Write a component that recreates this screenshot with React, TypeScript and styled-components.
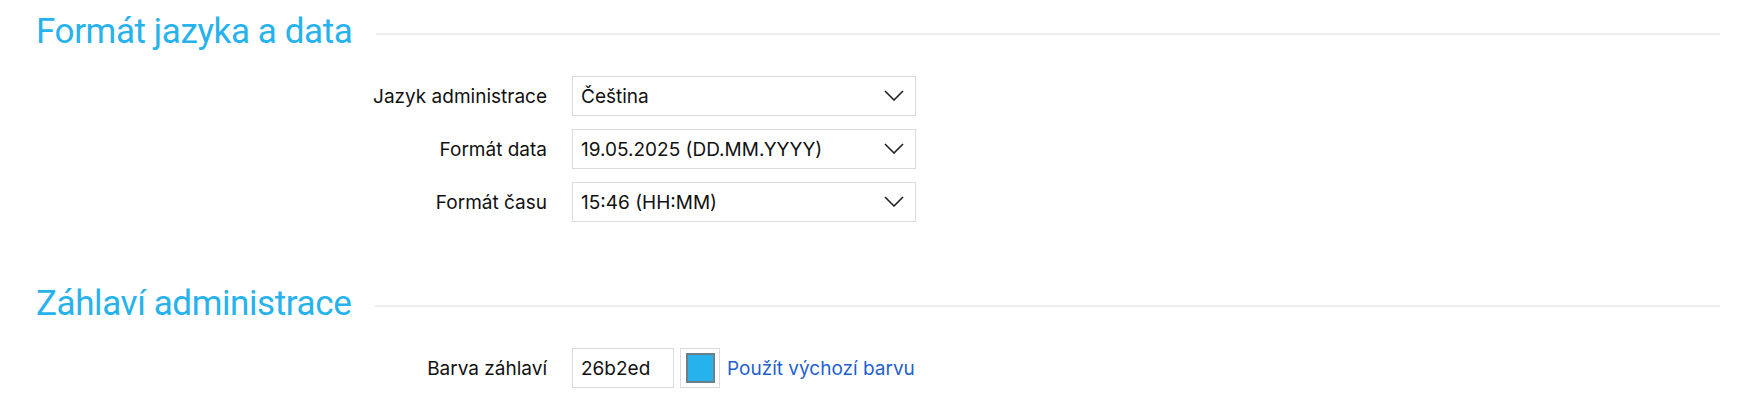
import styled, { createGlobalStyle } from "styled-components";

const GlobalStyle = createGlobalStyle`
  html, body {
    margin: 0;
    padding: 0;
    background: #fff;
  }
  body {
    font-family: Inter, "Noto Sans", sans-serif;
    color: #111;
  }
`;

const Page = styled.div`
  padding: 9px 35px 0 36px;
`;

const SectionHead = styled.div`
  display: flex;
  align-items: center;
  height: 44px;
  margin-top: ${(props: { $gap?: number }) => props.$gap ?? 0}px;
`;

const SectionTitle = styled.h2`
  margin: 0;
  font-family: Roboto, "Liberation Sans", sans-serif;
  font-weight: 400;
  font-size: 35px;
  letter-spacing: -0.4px;
  color: #26b2ed;
  white-space: nowrap;
`;

const Rule = styled.div`
  flex: 1;
  height: 2px;
  margin-left: 24px;
  margin-top: 5px;
  background: #eeeeee;
`;

const Form = styled.div`
  display: flex;
  flex-direction: column;
  gap: 13px;
  margin-top: 23px;
`;

const Row = styled.div`
  display: grid;
  grid-template-columns: 511px 1fr;
  column-gap: 25px;
  align-items: center;
`;

const Label = styled.label`
  text-align: right;
  font-size: 19px;
  color: #111;
`;

const SelectWrap = styled.div`
  position: relative;
  width: 344px;
  height: 40px;
`;

const Select = styled.select`
  appearance: none;
  width: 100%;
  height: 100%;
  box-sizing: border-box;
  border: 1px solid #dcdcdc;
  border-radius: 0;
  background: #fff;
  padding: 0 40px 0 8px;
  font-family: Inter, "Noto Sans", sans-serif;
  font-size: 19px;
  color: #111;
  outline: none;
`;

const Chevron = styled.svg`
  position: absolute;
  right: 12px;
  top: 14px;
  width: 20px;
  height: 11px;
  pointer-events: none;
`;

const Controls = styled.div`
  display: flex;
  align-items: center;
`;

const ColorInput = styled.input`
  width: 102px;
  height: 40px;
  box-sizing: border-box;
  border: 1px solid #dcdcdc;
  padding: 0 8px;
  font-family: Inter, "Noto Sans", sans-serif;
  font-size: 19px;
  color: #111;
  outline: none;
`;

const Swatch = styled.div`
  width: 40px;
  height: 40px;
  box-sizing: border-box;
  margin-left: 6px;
  border: 1px solid #dcdcdc;
  display: flex;
  align-items: center;
  justify-content: center;
`;

const SwatchFill = styled.div<{ $color: string }>`
  width: 29px;
  height: 30px;
  box-sizing: border-box;
  border: 2px solid #6f7f88;
  background: ${(props) => props.$color};
`;

const ResetLink = styled.a`
  margin-left: 7px;
  font-size: 19px;
  color: #1f5fcf;
  text-decoration: none;
  cursor: pointer;
`;

interface ISelectField {
  label: string;
  value: string;
}

function SelectField({ label, value }: ISelectField) {
  return (
    <Row>
      <Label>{label}</Label>
      <SelectWrap>
        <Select defaultValue={value}>
          <option value={value}>{value}</option>
        </Select>
        <Chevron viewBox="0 0 20 11" fill="none">
          <polyline
            points="1,1 10,10 19,1"
            stroke="#222"
            strokeWidth="1.6"
            strokeLinejoin="miter"
          />
        </Chevron>
      </SelectWrap>
    </Row>
  );
}

const fields: ISelectField[] = [
  { label: "Jazyk administrace", value: "Čeština" },
  { label: "Formát data", value: "19.05.2025 (DD.MM.YYYY)" },
  { label: "Formát času", value: "15:46 (HH:MM)" },
];

function App() {
  const color = "26b2ed";
  return (
    <>
      <GlobalStyle />
      <Page>
        <SectionHead>
          <SectionTitle>Formát jazyka a data</SectionTitle>
          <Rule />
        </SectionHead>
        <Form>
          {fields.map((f) => (
            <SelectField key={f.label} label={f.label} value={f.value} />
          ))}
        </Form>

        <SectionHead $gap={59}>
          <SectionTitle>Záhlaví administrace</SectionTitle>
          <Rule />
        </SectionHead>
        <Form>
          <Row>
            <Label>Barva záhlaví</Label>
            <Controls>
              <ColorInput defaultValue={color} />
              <Swatch>
                <SwatchFill $color={"#" + color} />
              </Swatch>
              <ResetLink>Použít výchozí barvu</ResetLink>
            </Controls>
          </Row>
        </Form>
      </Page>
    </>
  );
}

export default App;
